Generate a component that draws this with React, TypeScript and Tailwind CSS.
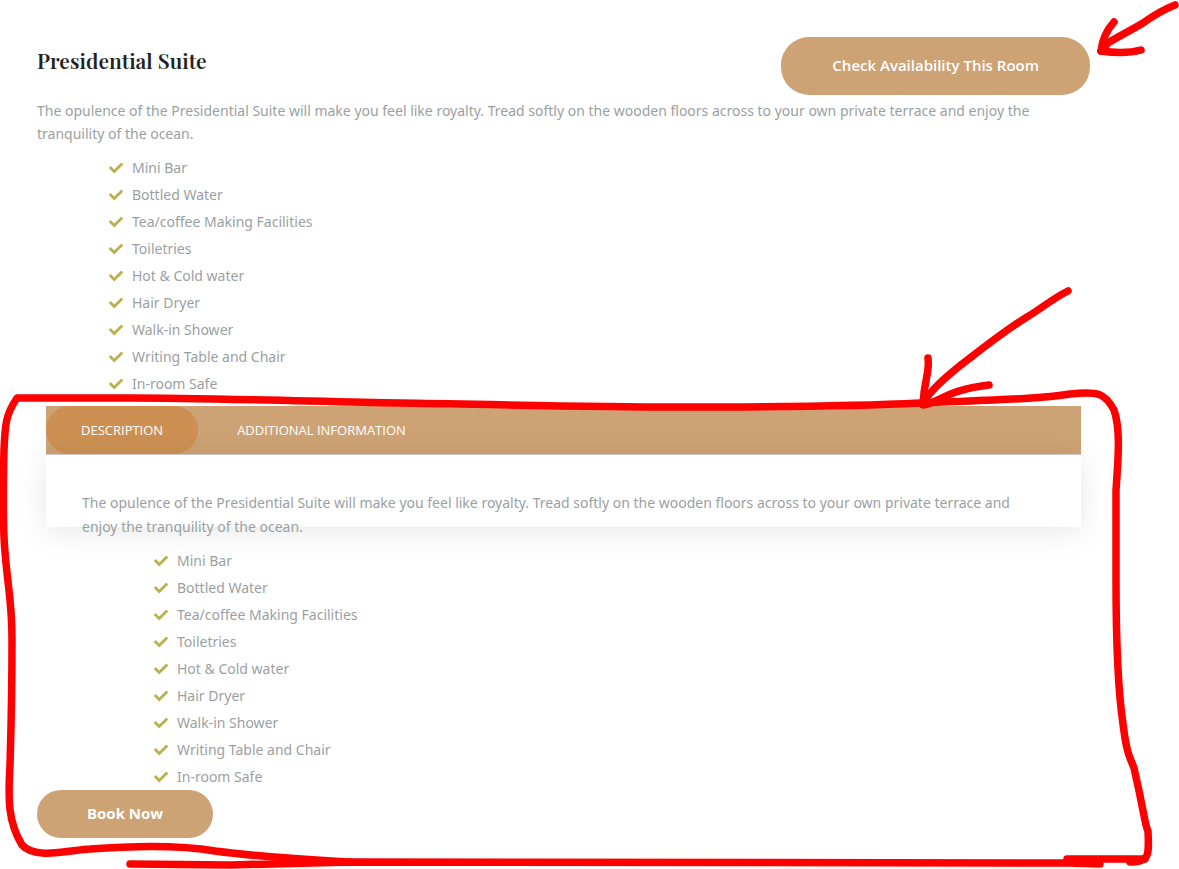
import { useState } from "react";
import { FaCheck } from "react-icons/fa";

const DESCRIPTION =
  "The opulence of the Presidential Suite will make you feel like royalty. Tread softly on the wooden floors across to your own private terrace and enjoy the tranquility of the ocean.";

const AMENITIES = [
  "Mini Bar",
  "Bottled Water",
  "Tea/coffee Making Facilities",
  "Toiletries",
  "Hot & Cold water",
  "Hair Dryer",
  "Walk-in Shower",
  "Writing Table and Chair",
  "In-room Safe",
];

const TABS = ["Description", "Additional information"];

const AmenityList = () => {
  return (
    <ul className="pl-18">
      {AMENITIES.map((amenity) => (
        <li key={amenity} className="flex items-center gap-[9px] leading-[27px]">
          <FaCheck className="size-3.5 shrink-0 text-[#bab04f]" />
          {amenity}
        </li>
      ))}
    </ul>
  );
};

const RoomTabs = () => {
  const [active, setActive] = useState(TABS[0]);

  return (
    <div className="mx-[9px]">
      <div role="tablist" className="flex gap-1 border-b border-[#d3ced2] bg-[#cda274] font-['Open_Sans',sans-serif]">
        {TABS.map((tab) => (
          <button
            key={tab}
            type="button"
            role="tab"
            aria-selected={tab === active}
            onClick={() => setActive(tab)}
            className={`h-12 rounded-3xl px-[35px] text-[13px] text-white uppercase ${
              tab === active ? "bg-[#cc9052]" : ""
            }`}
          >
            {tab}
          </button>
        ))}
      </div>
      <div role="tabpanel" className="relative">
        {/* card is shorter than its content */}
        <div className="absolute inset-x-0 top-0 h-18 bg-white shadow-[0_4px_30px_rgba(0,0,0,0.1)]" />
        <div className="relative flex flex-col gap-2 px-9 pt-9">
          <p className="leading-6">{DESCRIPTION}</p>
          <AmenityList />
        </div>
      </div>
    </div>
  );
};

const Markup = () => {
  return (
    <svg
      className="pointer-events-none absolute top-0 left-0"
      width="1179"
      height="869"
      viewBox="0 0 1179 869"
      fill="none"
      stroke="#ff0000"
      strokeWidth="7.5"
      strokeLinecap="round"
      strokeLinejoin="round"
      aria-hidden="true"
    >
      <path d="M1175 5C1165 9 1157 13 1143 23C1130 31 1117 37 1108 43L1101 51" />
      <path d="M1114 22C1106 31 1102 41 1101 51C1115 53 1130 53 1141 50" />
      <path d="M1068 291C1052 299 1042 308 1027 317C1006 330 988 344 970 358C950 373 932 388 922 404" />
      <path d="M928 358C930 374 924 378 923 405C940 403 945 390 989 385" />
      <path d="M1130 862C1150 862 1149 855 1148 831C1145 826 1145 816 1134 768C1130 757 1127 756 1123 724C1118 690 1116 640 1116 580L1116 490C1118 460 1121 430 1114 410C1105 393 1098 391 1070 394C1040 399 990 400 920 403C840 407 760 407 680 407C580 407 480 404 400 403C300 401 200 398 130 398L17 398C6 414 5 424 4 450C3 490 3 530 5 552C8 590 12 600 12 640C12 700 11 730 10 765C8 800 8 822 22 845C35 860 70 850 90 849C130 846 180 845 215 851C260 857 300 859 350 862" />
      <path d="M130 864L230 865L350 862L1070 863L1100 864" />
      <path d="M1067 859H1145" />
    </svg>
  );
};

export default function App() {
  return (
    <div className="relative overflow-hidden bg-white font-['Noto_Sans','Open_Sans',sans-serif] text-sm text-[#9a9fa2]">
      <main className="pt-[37px] pr-[89px] pb-[31px] pl-[37px]">
        <div className="mb-1 flex items-start justify-between">
          <h2 className="font-['Playfair_Display','Liberation_Serif',serif] text-[21px] leading-[46px] font-semibold text-[#222]">
            Presidential Suite
          </h2>
          <button
            type="button"
            className="h-[58px] rounded-[28px] bg-[#cda274] px-[51px] font-['Open_Sans',sans-serif] text-[15px] font-semibold text-white"
          >
            Check Availability This Room
          </button>
        </div>
        <div className="flex flex-col gap-[9px]">
          <p className="leading-[23px]">{DESCRIPTION}</p>
          <AmenityList />
          <RoomTabs />
        </div>
        <button
          type="button"
          className="h-12 rounded-3xl bg-[#cda274] px-[50px] font-['Open_Sans',sans-serif] text-[15px] font-bold text-white"
        >
          Book Now
        </button>
      </main>
      <Markup />
    </div>
  );
}
